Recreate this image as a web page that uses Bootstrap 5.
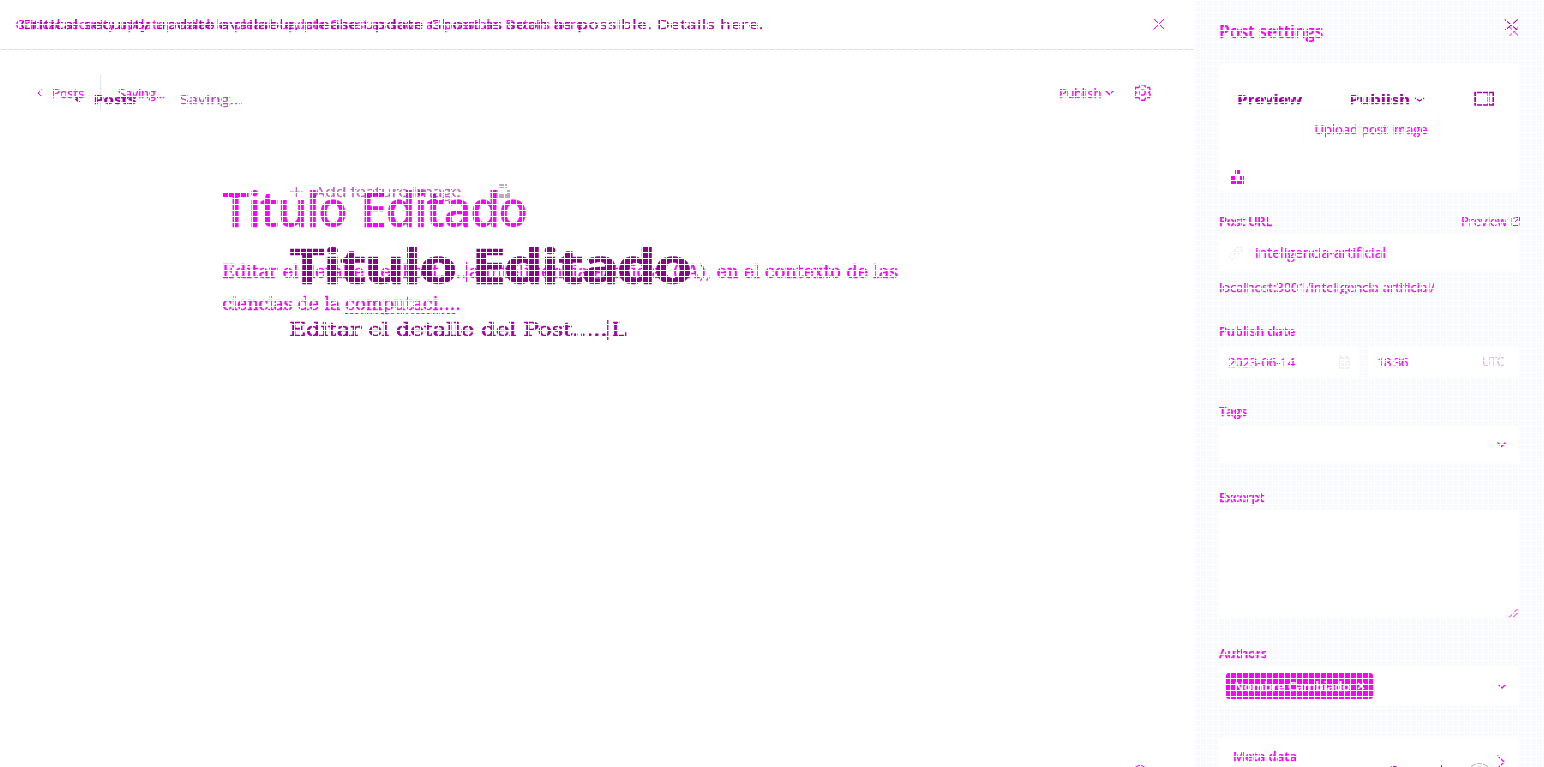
<!DOCTYPE html>
<html lang="es">
<head>
<meta charset="utf-8">
<title>Post editor</title>
<link href="https://cdn.jsdelivr.net/npm/bootstrap@5.3.0/dist/css/bootstrap.min.css" rel="stylesheet">
<style>
html,body{height:767px;overflow:hidden}
body{background:#fff;font-family:"Open Sans","Noto Sans",sans-serif;color:#f0f;font-size:13px;line-height:18px;-webkit-text-stroke:.25px currentColor}
svg{display:block;fill:none;stroke:currentColor;overflow:visible}
.stack{width:1544px;height:767px;overflow:hidden}
.stack>*{grid-area:1/1;min-width:0;height:767px;overflow:hidden}
.mesh{z-index:3;pointer-events:none;background:repeating-linear-gradient(90deg,#fff 0 1px,transparent 1px 6px),repeating-linear-gradient(#fff 0 1px,transparent 1px 6px)}
.serif{font-family:"DejaVu Serif",serif;font-size:18px;line-height:32px;-webkit-text-stroke:.35px currentColor}
.lane{display:grid;align-items:center}
.lane span,.fit{white-space:pre;justify-self:start}
/* editor with settings panel */
.pane{width:1195px;flex:none}
.notice{height:50px;border-bottom:1px solid #dedede;grid-template-columns:15.500px 1137.5px 1fr;font-weight:500;font-size:13.500px}
.notice span{margin-top:-2px}
.notice svg{margin-top:-1px}
.tools{margin-top:24px;height:37px;font-size:13px;grid-template-columns:37px 15px 48px 18px 941px 46px 29px 1fr}
.rule{width:1px;height:36px;background:#dde6f0}
.headline{margin:69px 0 18px 222px;font-size:48px;line-height:58px;font-weight:600;word-spacing:3px}
.copy{margin-left:222px}
.caret{display:inline-block;width:1px;height:20px;background:currentColor;vertical-align:-4px;margin-right:2px}
.typo{border-bottom:1px dashed #f0f;line-height:19px;display:inline-block}
.help{margin:445px 0 0 1132px}
.settings{width:349px;background:#f9fafd;padding:0 24px}
.settings h2{font-size:17.500px;font-weight:600;margin:0;height:63px;line-height:63px}
.box{background:#fff;border-radius:4px;border:1px solid #fdfdfe}
.upload{height:129px;padding:47px 0 0 83px}
.upload-btn{width:136px;height:36px;border:1px solid #fdfdfd;border-radius:4px}
.upload svg{margin:23px 0 0 -72px}
.label{font-weight:600;height:18px}
.field{height:38px;font-size:14px}
.pale{color:#e3e6ea}
.chip{background:#f0f;color:#fff;height:26px;width:147px;border-radius:3px;padding:0 8px;font-weight:600}
/* wider rendering of the same editor */
.zoomed{width:1187.7px;transform:scaleX(1.3);transform-origin:0 0;color:#a500a5;mix-blend-mode:multiply;z-index:2}
.zoomed .notice{border:0;grid-template-columns:15.5px 1141.5px 1fr}
.zoomed .tools{height:50px;grid-template-columns:57px 15px 66px 813.5px 86px 50.3px 46px 1fr;font-weight:700}
.feature{color:#b868bc;height:20px;margin-top:58px;font-size:14px;grid-template-columns:223px 18.6px 139.4px 1fr}
.zoomed .headline{margin:34px 0 18px 222.600px;font-weight:700;line-height:60px;color:#8a008a;word-spacing:2px;-webkit-text-stroke:.5px currentColor}
.zoomed .copy{margin-left:222.600px;-webkit-text-stroke:.6px currentColor}
.foot{margin-top:415px;height:18px;align-items:start;grid-template-columns:1068.5px 61.5px 1fr}
</style>
</head>
<body>
<div class="stack d-grid">
  <div class="d-flex">
    <main class="pane">
      <div class="notice lane"><i></i><span data-w="572">Critical security update available, please update Ghost as soon as possible. Details here.</span><svg width="12" height="12"><path d="M.5.5l11 11m0-11l-11 11"/></svg></div>
      <div class="tools lane"><i></i><svg width="6" height="8"><path d="M4.5.5L1 4l3.500 3.500"/></svg><span data-w="32">Posts</span><b class="rule"></b><span data-w="47">Saving...</span><span data-w="42">Publish</span><svg width="9" height="6"><path stroke-width="1.300" d="M.5.5l4 4 4-4"/></svg><svg width="17" height="17" viewBox="0 0 17 17"><path stroke-width="1.400" d="M6.500.8h4l.8 2 2 .9 2-.3.9 3-1.400 2.100 1.400 2.200-.9 3-2-.3-2 .9-.8 2h-4l-.8-2-2-.9-2 .3-.9-3L2.200 8.500.8 6.400l.9-3 2 .3 2-.9z"/><circle cx="8.500" cy="8.500" r="2.700" stroke-width="1.300"/></svg></div>
      <div class="headline"><span class="fit" data-w="304.500">Titulo Editado</span></div>
      <div class="copy serif"><div><span class="fit" data-w="244">Editar el detalle del Post.....</span><i class="caret"></i><span class="fit" data-w="429">a inteligencia artificial (IA), en el contexto de las</span></div><div><span class="fit" data-w="123">ciencias de la </span><span class="fit typo" data-w="110">computaci...</span><span class="fit">.</span></div></div>
      <svg class="help" width="16" height="16"><circle cx="8" cy="8" r="7.500"/></svg>
    </main>
    <aside class="settings">
      <div class="d-flex justify-content-between align-items-center"><h2><span class="fit" data-w="104">Post settings</span></h2><svg width="11" height="10"><path d="M.5 0l9 9m0-9l-9 9"/></svg></div>
      <div class="box upload"><div class="upload-btn d-flex align-items-center justify-content-center"><span class="fit" data-w="113">Upload post image</span></div><svg width="14" height="14"><path fill="#f0f" stroke="none" d="M4 0h5v4H4zM0 6h4v4h5V6h4v8H0z"/></svg></div>
      <div class="d-flex justify-content-between" style="margin-top:20px"><span class="label fit" data-w="53">Post URL</span><div class="d-flex align-items-center"><span class="fit" data-w="46">Preview</span><svg class="ms-1" width="9" height="9"><path d="M4 1H1v7.500h7V5M5 .5h3.500V4M8.500.5L4 5"/></svg></div></div>
      <div class="box field d-flex align-items-center mt-1" style="padding-left:9px"><svg class="pale" width="14" height="14"><path d="M6 4l3-3q2-1 4 1 1 2-1 4l-3 2M8 6Q6 3 4 6L1 9q-1 2 1 4 2 1 4-1l2-2M5 9l4-4"/></svg><span class="fit" style="margin-left:12px" data-w="131">inteligencia-artificial</span></div>
      <div style="margin-top:6px"><span class="fit" data-w="216">localhost:3001/inteligencia-artificial/</span></div>
      <div class="label" style="margin-top:26px"><span class="fit" data-w="76">Publish date</span></div>
      <div class="d-flex gap-2" style="margin-top:6px">
        <div class="box d-flex align-items-center justify-content-between" style="width:141px;height:32px;padding:0 9px 0 8px"><span class="fit" data-w="67">2023-06-14</span><svg class="pale" width="12" height="14"><path d="M1 3h10v10H1zM3 0v4m6-4v4M1 6h10M3 9h6M3 11h6"/></svg></div>
        <div class="box d-flex align-items-center justify-content-between flex-fill" style="padding:0 15px 0 8px"><span class="fit" data-w="31">18:36</span><span class="fit" style="color:#e8b4ec;font-size:12px" data-w="22">UTC</span></div>
      </div>
      <div class="label" style="margin-top:24px"><span class="fit" data-w="28">Tags</span></div>
      <div class="box field d-flex align-items-center justify-content-end" style="margin-top:6px;padding-right:13px"><svg width="9" height="6"><path stroke-width="1.300" d="M.5.5l4 4 4-4"/></svg></div>
      <div class="label" style="margin-top:24px"><span class="fit" data-w="45">Excerpt</span></div>
      <div class="box d-flex align-items-end justify-content-end mt-1" style="height:108px"><svg width="10" height="8"><path d="M0 8.500L8.500 0M4 8.500L8.500 4"/></svg></div>
      <div class="label" style="margin-top:26px"><span class="fit" data-w="48">Authors</span></div>
      <div class="box d-flex align-items-center justify-content-between mt-1" style="height:40px;padding:0 13px 0 6px"><div class="chip d-flex align-items-center justify-content-between"><span class="fit" data-w="116">Nombre Cambiado</span><svg width="8" height="8"><path stroke-width="1.500" d="M1 1l6 6m0-6L1 7"/></svg></div><svg width="8" height="5"><path stroke-width="1.300" d="M.5.5L4 4 7.500.5"/></svg></div>
      <div class="box d-flex justify-content-between" style="margin-top:30px;height:60px;padding:10px 14px 0 13px"><span class="label fit" data-w="64">Meta data</span><svg style="margin-top:8px" width="8" height="14"><path stroke-width="1.300" d="M.5.5L7 7 .5 13.500"/></svg></div>
    </aside>
  </div>
  <section class="zoomed">
    <div class="notice lane"><i></i><span data-w="572">Critical security update available, please update Ghost as soon as possible. Details here.</span><svg width="11" height="12"><path d="M.5.5l10 11m0-11l-10 11"/></svg></div>
    <div class="tools lane"><i></i><svg width="6" height="7"><path stroke-width="1.500" d="M4.500.5L1.500 3.500l3 3"/></svg><span data-w="32.500">Posts</span><span data-w="48.500" class="fw-normal" style="color:#c040c8">Saving...</span><span data-w="50">Preview</span><span data-w="47">Publish</span><svg width="8" height="6"><path d="M.5 2l3.500 3 3.500-3"/></svg><svg width="16" height="14"><path stroke-width="1.500" d="M.8.5h14v12.500h-14zM11 .5v13"/></svg></div>
    <div class="feature lane"><i></i><svg width="10" height="10"><path d="M5 0v10M0 5h10"/></svg><span data-w="113">Add feature image</span><svg width="12" height="14" style="margin-top:-3px"><path fill="#bda8c0" stroke="none" d="M3 0h6v4H3zM0 6h3v4h6V6h3v8H0z"/></svg></div>
    <div class="headline"><span class="fit" data-w="308">Titulo Editado</span></div>
    <div class="copy serif"><span class="fit" data-w="244.500">Editar el detalle del Post.....</span><i class="caret"></i><span class="fit" data-w="10">L</span></div>
    <div class="foot lane"><i></i><span data-w="48">8 words</span><svg width="16" height="16" style="color:#bbb;margin-top:2px"><circle cx="8" cy="8" r="7.500"/><path d="M6 6q0-2 2-2t2 2q0 1-2 2v2"/></svg></div>
  </section>
  <div class="mesh"></div>
</div>
<script src="https://cdn.jsdelivr.net/npm/bootstrap@5.3.0/dist/js/bootstrap.bundle.min.js"></script>
<script>
// Track every label out to the measure given in data-w
document.querySelectorAll('[data-w]').forEach(function(el){
  var range=document.createRange();range.selectNodeContents(el);
  var w=range.getBoundingClientRect().width;
  if(el.closest('.zoomed'))w/=1.3;
  el.style.letterSpacing=((el.dataset.w-w)/el.textContent.length)+'px';
});
</script>
</body>
</html>
